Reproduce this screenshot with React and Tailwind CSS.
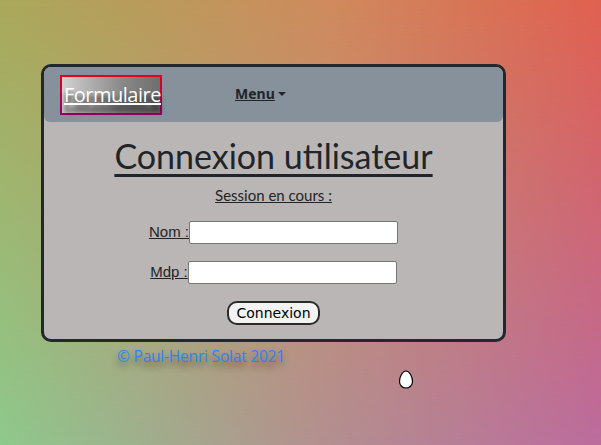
import React from 'react';

export default function App() {
  return (
    <div className="relative min-h-[445px] w-full overflow-hidden bg-[linear-gradient(to_right,#8fc98c,#b2938f_50%,#bc6c9e)]">
      {/* top half of the background */}
      <div className="absolute inset-0 bg-[linear-gradient(to_right,#a9a85a,#cf8a5c_55%,#e0604f)] [mask-image:linear-gradient(to_bottom,black,transparent)]" />

      <div className="relative pt-[64px] pl-[41px]">
        <div className="w-[465px] h-[278px] rounded-[10px] border-[3px] border-[#23272e] bg-[#bab6b5] overflow-hidden">
          {/* Header */}
          <div className="h-[55px] bg-[#87919b] rounded-b-[6px] flex items-start pl-[16px] pt-[8px]">
            <div className="w-[102px] h-[40px] p-[2px] bg-[linear-gradient(to_bottom,#e8001c,#96006e)]">
              <div className="h-full w-full bg-[linear-gradient(to_right,#d2d2d2,#8a8a8a_60%,#6e6e6e)] flex items-center">
                <a className="text-white underline text-[20px] leading-none pl-[2px] [text-shadow:0_6px_5px_rgba(0,0,0,0.9)] font-['Open_Sans',sans-serif] tracking-[-0.5px]">
                  Formulaire
                </a>
              </div>
            </div>
            <div className="ml-[73px] mt-[8px] flex items-center">
              <span className="text-[#212529] font-bold underline text-[14px] font-['Noto_Sans',sans-serif]">Menu</span>
              <svg width="10" height="6" viewBox="0 0 10 6" className="ml-[2px]">
                <path d="M1 1h8L5 5z" fill="#212529" />
              </svg>
            </div>
          </div>

          {/* Body */}
          <div className="flex flex-col items-center">
            <h1 className="mt-[12px] text-[34px] leading-[44px] text-[#212529] underline decoration-[3px] underline-offset-[5px] font-['Lato',sans-serif]">
              Connexion utilisateur
            </h1>
            <p className="mt-[6px] text-[15px] text-[#212529] underline font-['Lato',sans-serif]">Session en cours :</p>

            <div className="mt-[14px] flex flex-col items-center gap-[17px] font-['Liberation_Sans',sans-serif] text-[15px] text-[#212529]">
              <div className="flex items-center">
                <label className="underline">Nom :</label>
                <input className="w-[209px] h-[23px] bg-white border border-[#767676] rounded-[2px]" />
              </div>
              <div className="flex items-center">
                <label className="underline">Mdp :</label>
                <input className="w-[209px] h-[23px] bg-white border border-[#767676] rounded-[2px]" />
              </div>
            </div>

            <button className="mt-[17px] h-[24px] px-[7px] rounded-[10px] border-2 border-[#2b2b2b] bg-[#f3f3f3] text-black text-[14px] leading-none font-['DejaVu_Sans',sans-serif]">
              Connexion
            </button>
          </div>
        </div>

        <p className="ml-[76px] mt-[3px] text-[#2a86f5] text-[15.5px] font-['Open_Sans',sans-serif] tracking-[-0.2px] [text-shadow:0_5px_7px_rgba(0,0,0,0.45)]">
          © Paul-Henri Solat 2021
        </p>
      </div>

      {/* egg */}
      <svg className="absolute left-[398px] top-[370px]" width="16" height="19" viewBox="0 0 16 19">
        <path d="M8 1C4.5 1 1.5 7 1.5 11.5C1.5 15.5 4.5 18 8 18C11.5 18 14.5 15.5 14.5 11.5C14.5 7 11.5 1 8 1Z" fill="white" stroke="black" strokeWidth="1.2" />
      </svg>
    </div>
  );
}
